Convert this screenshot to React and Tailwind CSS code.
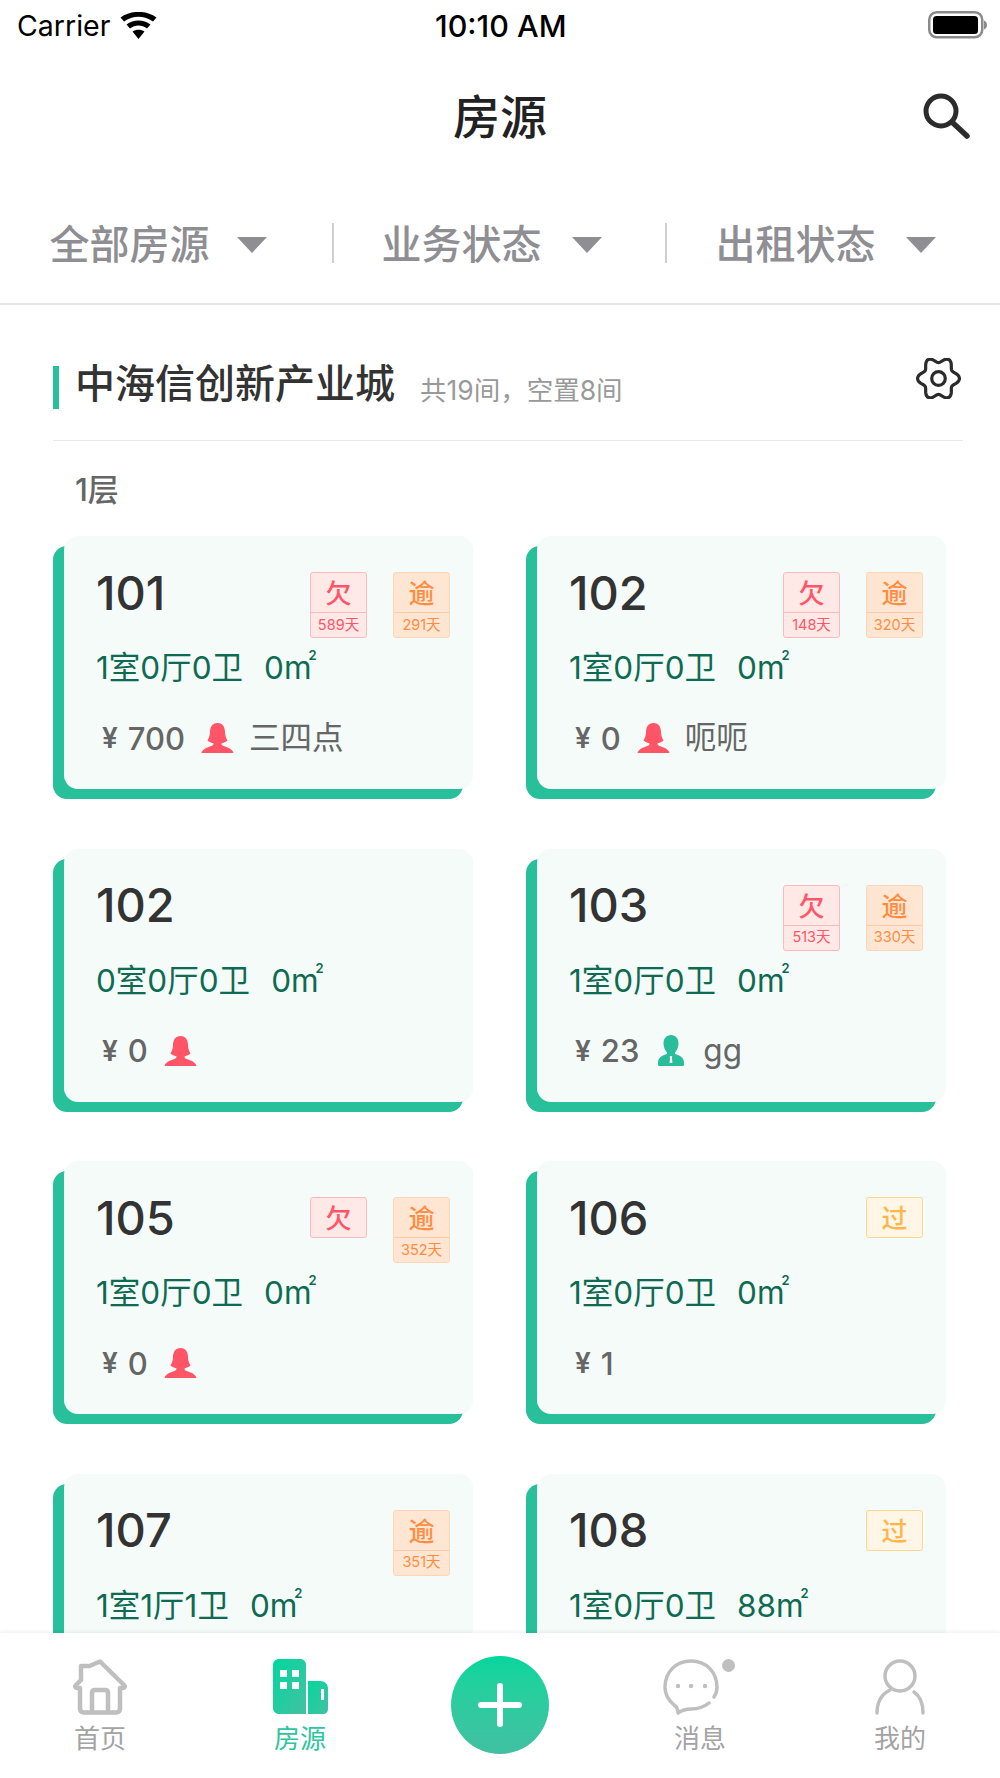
const sans = "font-['Inter','Noto_Sans_CJK_SC',sans-serif]";

const cards = [
  { no: "101", owe: "589天", late: "291天", rooms: "1室0厅0卫", area: "0", rent: "700", person: "f", name: "三四点" },
  { no: "102", owe: "148天", late: "320天", rooms: "1室0厅0卫", area: "0", rent: "0", person: "f", name: "呃呃" },
  { no: "102", rooms: "0室0厅0卫", area: "0", rent: "0", person: "f" },
  { no: "103", owe: "513天", late: "330天", rooms: "1室0厅0卫", area: "0", rent: "23", person: "m", name: "gg" },
  { no: "105", owe: "", late: "352天", rooms: "1室0厅0卫", area: "0", rent: "0", person: "f" },
  { no: "106", past: true, rooms: "1室0厅0卫", area: "0", rent: "1" },
  { no: "107", late: "351天", rooms: "1室1厅1卫", area: "0" },
  { no: "108", past: true, rooms: "1室0厅0卫", area: "88" },
];

// wavy six-lobed outline of the settings gear
const gearPath = Array.from({ length: 144 }, (_, i) => {
  const a = (i / 144) * Math.PI * 2;
  const r = 17.6 + 2.7 * Math.cos(6 * a);
  return `${i ? "L" : "M"}${(22.5 + 1.03 * r * Math.cos(a)).toFixed(2)} ${(20.5 + 1.07 * r * Math.sin(a)).toFixed(2)}`;
}).join("") + "Z";

function FemaleIcon() {
  return (
    <svg width="33" height="30" viewBox="0 0 33 30" className="shrink-0">
      <path d="M16.5 0C11 0 9 4.5 9 9c0 3-1 6-2.500 8.500 2 2 5 2.500 6 3 0 1-.5 2-2 2.500C6 24.500 1.500 26 .5 30h32c-1-4-5.500-5.500-10-7-1.500-.5-2-1.500-2-2.500 1-.5 4-1 6-3C25 15 24 12 24 9c0-4.500-2-9-7.500-9z" fill="#ff5566" />
    </svg>
  );
}

function MaleIcon() {
  return (
    <svg width="26" height="32" viewBox="0 0 26 32" className="shrink-0">
      <path d="M13 0C8.500 0 5.500 3.500 5.500 8.500c0 3.500 1.500 7 3.500 9V19C5 20.500.5 21.500 0 27v2.500c0 1 1 1.500 2 1.500h22c1 0 2-.5 2-1.500V27c-.5-5.500-5-6.500-9-8v-1.500c2-2 3.500-5.500 3.500-9C20.500 3.500 17.500 0 13 0z" fill="#2abd9a" />
      <path d="M11.800 21h2.400l-.2 2 .4 5h-2.800l.4-5z" fill="#fff" />
    </svg>
  );
}

function Badge({ char, sub, tone }) {
  const styles = {
    red: ["bg-[#ffe9e7] border-[#ffb9bd]", "text-[#ff5566]", "border-[#ffb9bd]"],
    orange: ["bg-[#ffe6d3] border-[#ffd5b5]", "text-[#ff8c42]", "border-[#ffc9a3]"],
    yellow: ["bg-[#fff6e6] border-[#ffd590]", "text-[#ffb54d]", ""],
  }[tone];
  return (
    <div className={`w-[57px] rounded-[3px] border ${styles[0]} ${styles[1]} flex flex-col items-center`}>
      <div className="h-[39px] pt-[3px] flex items-center justify-center text-[26px] font-medium leading-none">{char}</div>
      {sub && <div className={`w-full h-[25px] border-t ${styles[2]} flex items-center justify-center text-[14.5px] leading-none`}>{sub}</div>}
    </div>
  );
}

function Card({ c }) {
  return (
    <div className="w-[410px] h-[253px] rounded-[14px] bg-[#28bf9b]">
      <div className="relative -top-[10px] left-[11px] w-[409px] h-[253px] rounded-[14px] bg-[#f4fbf9] pl-[32px] pr-[23px] pt-[36px]">
        <div className="h-[65px] flex items-start justify-between">
          <div className="h-[40px] flex items-center text-[47px] font-medium leading-none text-[#333333]">{c.no}</div>
          <div className="flex items-start gap-[26px]">
            {c.owe !== undefined && <Badge char="欠" sub={c.owe} tone="red" />}
            {c.late && <Badge char="逾" sub={c.late} tone="orange" />}
            {c.past && <Badge char="过" tone="yellow" />}
          </div>
        </div>
        <div className="mt-[11px] h-[40px] flex items-center text-[31.5px] leading-none text-[#0e6b52] gap-[21px]">
          <span>{c.rooms}</span>
          <span className="relative">{c.area}m<span className="absolute -top-[3px] -right-[5px] text-[13px] font-semibold">2</span></span>
        </div>
        {c.rent && (
          <div className="mt-[30px] h-[40px] pl-[6px] flex items-center leading-none text-[#666666]">
            <span className="mr-[10px] text-[28px] font-semibold">¥</span>
            <span className="text-[31px] font-medium">{c.rent}</span>
            {c.person === "f" && <span className="ml-[16px] mr-[15px]"><FemaleIcon /></span>}
            {c.person === "m" && <span className="ml-[19px] mr-[19px]"><MaleIcon /></span>}
            {c.name && <span className="text-[31.5px]">{c.name}</span>}
          </div>
        )}
      </div>
    </div>
  );
}

function Filter({ label, wide }) {
  return (
    <div className={`flex items-center justify-center pr-[16px] ${wide ? "gap-[30px]" : "gap-[27px]"}`}>
      <span className="text-[40px] leading-none text-[#8e8e93] font-medium">{label}</span>
      <svg width="30" height="16" viewBox="0 0 30 16"><path d="M0 0h30L15 16z" fill="#8e8e93" /></svg>
    </div>
  );
}

function Tab({ label, active, children }) {
  return (
    <div className="flex flex-col items-center pt-[26px]">
      <div className="h-[55px] flex items-center justify-center relative">{children}</div>
      <span className={`mt-[12px] text-[26px] leading-none ${active ? "text-[#2fc4a0]" : "text-[#a3a3a3]"}`}>{label}</span>
    </div>
  );
}

export default function App() {
  return (
    <div className={`relative h-[1778px] w-[1000px] overflow-hidden bg-white ${sans}`}>
      {/* status bar */}
      <div className="h-[50px] flex items-center justify-between pl-[17px] pr-[13px] text-black relative">
        <div className="flex items-center gap-[10px]">
          <span className="text-[28.5px] leading-none pt-[2px]">Carrier</span>
          <svg width="37" height="27" viewBox="0 0 36 27">
            <path d="M18 27l-6-7.500c3.500-2.500 8.500-2.500 12 0zM9.500 16.500L6 12.500c7-5.500 17-5.500 24 0l-3.500 4c-5-4-12-4-17 0zM3.500 9.500L0 5.500c10.500-7.500 25.500-7.500 36 0l-3.500 4C24 3 12 3 3.500 9.500z" fill="#000" />
          </svg>
        </div>
        <span className="absolute left-[435px] text-[30.5px] font-medium leading-none pt-[2px]">10:10 AM</span>
        <svg width="59" height="28" viewBox="0 0 59 28">
          <rect x="1.25" y="1.25" width="53" height="25" rx="7.5" fill="none" stroke="#8a8a8a" strokeWidth="2.5" />
          <rect x="5" y="5" width="45" height="18" rx="3.5" fill="#000" />
          <path d="M56 9.500c2 .5 3 2.500 3 4.500s-1 4-3 4.500z" fill="#8a8a8a" />
        </svg>
      </div>

      {/* nav */}
      <div className="h-[132px] relative flex items-center justify-center">
        <span className="text-[47px] font-medium leading-none text-[#222222]">房源</span>
        <svg width="50" height="48" viewBox="0 0 50 48" className="absolute right-[28px] top-[42px]">
          <circle cx="19" cy="19" r="15" fill="none" stroke="#2b2b2b" strokeWidth="5" />
          <path d="M31 31l14 13" stroke="#2b2b2b" strokeWidth="5.5" strokeLinecap="round" />
        </svg>
      </div>

      {/* filters */}
      <div className="h-[123px] border-b-2 border-[#e6e6e6] grid grid-cols-[332px_333px_1fr] items-center pt-[4px]">
        <Filter label="全部房源" />
        <div className="-mt-[4px] border-l-2 border-[#cfcfcf] h-[40px] pt-[4px] flex items-center justify-center"><Filter label="业务状态" wide /></div>
        <div className="-mt-[4px] border-l-2 border-[#cfcfcf] h-[40px] pt-[4px] flex items-center justify-center"><Filter label="出租状态" wide /></div>
      </div>

      {/* section header */}
      <div className="ml-[53px] mr-[37px] h-[136px] border-b border-[#e8e8e8] flex items-start pt-[53px]">
        <div className="flex items-center h-[52px]">
          <div className="w-[6px] h-[43px] bg-[#28bf9b] mt-[6px]" />
          <span className="ml-[16px] text-[40px] leading-none font-medium text-[#333333]">中海信创新产业城</span>
          <span className="ml-[25px] mt-[12px] text-[26.5px] leading-none text-[#999999]">共19间，空置8间</span>
        </div>
        <svg width="45" height="41" viewBox="0 0 45 41" className="ml-auto mr-[2px]" fill="none" stroke="#2b2b2b" strokeWidth="3.2">
          <path d={gearPath} />
          <circle cx="22.5" cy="20.5" r="6.8" />
        </svg>
      </div>

      <div className="pl-[75px] h-[105px] pt-[33px] text-[31px] leading-none font-medium text-[#666666]">1层</div>

      {/* rooms */}
      <div className="pl-[53px] grid grid-cols-[410px_410px] gap-x-[63px] gap-y-[59.5px]">
        {cards.map((c, i) => <Card key={i} c={c} />)}
      </div>

      {/* tab bar */}
      <div className="absolute left-0 right-0 bottom-0 h-[145px] bg-white shadow-[0_-1px_4px_rgba(0,0,0,0.08)] grid grid-cols-5">
        <Tab label="首页">
          <svg width="56" height="56" viewBox="0 0 56 56" fill="none" stroke="#bfbfbf" strokeWidth="4.5" strokeLinecap="round" strokeLinejoin="round">
            <path d="M9 21V7h8.500L28 2.500 52 26c1.500 1.500.5 3-1.500 3H48v20c0 3-1 4.500-4 4.500H12c-3 0-4-1.500-4-4.500V29H5.500c-2 0-3-1.500-1.500-3l5-5" />
            <path d="M20 53V34c0-2 1-3 3-3h10c2 0 3 1 3 3v19" />
          </svg>
        </Tab>
        <Tab label="房源" active>
          <svg width="56" height="56" viewBox="0 0 56 56">
            <defs><linearGradient id="bld" x1="0" y1="0" x2="1" y2="1"><stop offset="0" stopColor="#00d89e" /><stop offset="1" stopColor="#45c0a2" /></linearGradient></defs>
            <path d="M7 0h21c3.500 0 6 2.500 6 6v49H7c-3.500 0-6-2.500-6-6V6c0-3.500 2.500-6 6-6z" fill="url(#bld)" />
            <path d="M36 22h12c5 0 8 3 8 8v20c0 3-2 5-5 5H36z" fill="url(#bld)" />
            <path d="M8 11h7v7H8zM20 11h7v7h-7zM8 23h7v7H8zM20 23h7v7h-7z" fill="#fff" />
            <rect x="49" y="30" width="3" height="11" fill="#fff" />
          </svg>
        </Tab>
        <div className="flex justify-center pt-[23px]">
          <div className="w-[98px] h-[98px] rounded-full bg-linear-to-b from-[#00d69c] to-[#40c0a2] flex items-center justify-center">
            <svg width="44" height="44" viewBox="0 0 44 44"><path d="M3 22h38M22 3v38" stroke="#fff" strokeWidth="6" strokeLinecap="round" /></svg>
          </div>
        </div>
        <Tab label="消息">
          <svg width="56" height="56" viewBox="0 0 56 56" fill="none" stroke="#bfbfbf" strokeWidth="3.5" strokeLinecap="round" strokeLinejoin="round" className="-ml-[18px]">
            <path d="M46 44c-5 4-11 6-18 6-4 0-8 .5-13 4 0-4-1-6-4-8C5 41 2 35 2 28 2 13 13 2 28 2s26 11 26 26c0 4-1 7-3 10" />
            <circle cx="15" cy="27" r="2.2" fill="#bfbfbf" stroke="none" />
            <circle cx="28" cy="27" r="2.2" fill="#bfbfbf" stroke="none" />
            <circle cx="42" cy="27" r="2.2" fill="#bfbfbf" stroke="none" />
          </svg>
          <div className="absolute -right-[16px] top-0 w-[13px] h-[13px] rounded-full bg-[#bfbfbf]" />
        </Tab>
        <Tab label="我的">
          <svg width="50" height="56" viewBox="0 0 50 56" fill="none" stroke="#bfbfbf" strokeWidth="3.5" strokeLinecap="round">
            <circle cx="25" cy="17" r="15" />
            <path d="M2 54c0-11 5-19 13-23M39 33c6 4 9 12 9 21" />
          </svg>
        </Tab>
      </div>
    </div>
  );
}
